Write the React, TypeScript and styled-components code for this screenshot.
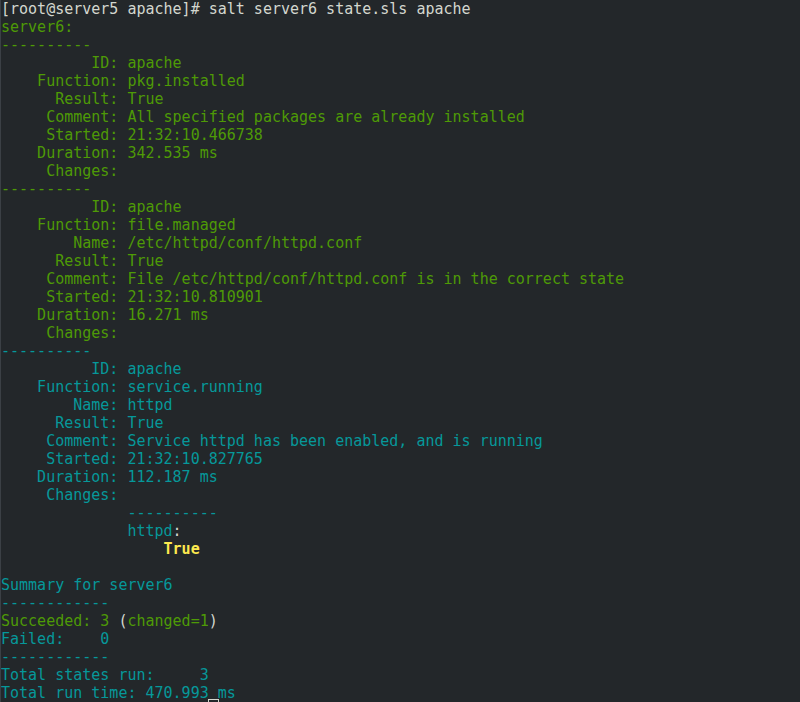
import React from "react";
import styled, { createGlobalStyle } from "styled-components";

const Global = createGlobalStyle`
  html, body { margin: 0; padding: 0; background: #23272a; }
  #root { width: 800px; height: 702px; overflow: hidden; }
`;

const C = {
  w: "#d3d7cf",
  g: "#4e9a06",
  c: "#06989a",
  y: "#fce94f",
} as const;

type Col = keyof typeof C;

const Terminal = styled.div`
  position: relative;
  box-sizing: border-box;
  width: 800px;
  height: 702px;
  background: #23272a;
  border-left: 1px solid #3b4045;
  font-family: "DejaVu Sans Mono", monospace;
  font-size: 15px;
  line-height: 18px;
  overflow: hidden;
`;

const Line = styled.div`
  height: 18px;
  white-space: pre;
`;

const Seg = styled.span<{ $c: Col; $b?: boolean }>`
  color: ${(p) => C[p.$c]};
  font-weight: ${(p) => (p.$b ? "bold" : "normal")};
`;

const Cursor = styled.div`
  position: absolute;
  left: 207px;
  top: 699px;
  width: 9px;
  height: 17px;
  border: 1px solid #d3d7cf;
`;

type S = [string, Col, boolean?];

const state = (col: Col, fields: [string, string][]): S[][] => [
  [["----------", col]],
  ...fields.map(([k, v]) => [[k.padStart(12, " ") + ": " + v, col] as S]),
];

const lines: S[][] = [
  [["[root@server5 apache]# salt server6 state.sls apache", "w"]],
  [["server6:", "g"]],
  ...state("g", [
    ["ID", "apache"],
    ["Function", "pkg.installed"],
    ["Result", "True"],
    ["Comment", "All specified packages are already installed"],
    ["Started", "21:32:10.466738"],
    ["Duration", "342.535 ms"],
    ["Changes", ""],
  ]),
  ...state("g", [
    ["ID", "apache"],
    ["Function", "file.managed"],
    ["Name", "/etc/httpd/conf/httpd.conf"],
    ["Result", "True"],
    ["Comment", "File /etc/httpd/conf/httpd.conf is in the correct state"],
    ["Started", "21:32:10.810901"],
    ["Duration", "16.271 ms"],
    ["Changes", ""],
  ]),
  ...state("c", [
    ["ID", "apache"],
    ["Function", "service.running"],
    ["Name", "httpd"],
    ["Result", "True"],
    ["Comment", "Service httpd has been enabled, and is running"],
    ["Started", "21:32:10.827765"],
    ["Duration", "112.187 ms"],
    ["Changes", ""],
  ]),
  [["              ----------", "c"]],
  [["              httpd", "c"], [":", "w"]],
  [["                  ", "w"], ["True", "y", true]],
  [],
  [["Summary for server6", "c"]],
  [["------------", "c"]],
  [["Succeeded: 3 ", "g"], ["(", "w"], ["changed=1", "g"], [")", "w"]],
  [["Failed:    0", "c"]],
  [["------------", "c"]],
  [["Total states run:     3", "c"]],
  [["Total run time: 470.993 ms", "c"]],
];

export default function App() {
  return (
    <>
      <Global />
      <Terminal>
        {lines.map((segs, i) => (
          <Line key={i}>
            {segs.map(([t, c, b], j) => (
              <Seg key={j} $c={c} $b={b}>
                {t}
              </Seg>
            ))}
          </Line>
        ))}
        <Cursor />
      </Terminal>
    </>
  );
}
